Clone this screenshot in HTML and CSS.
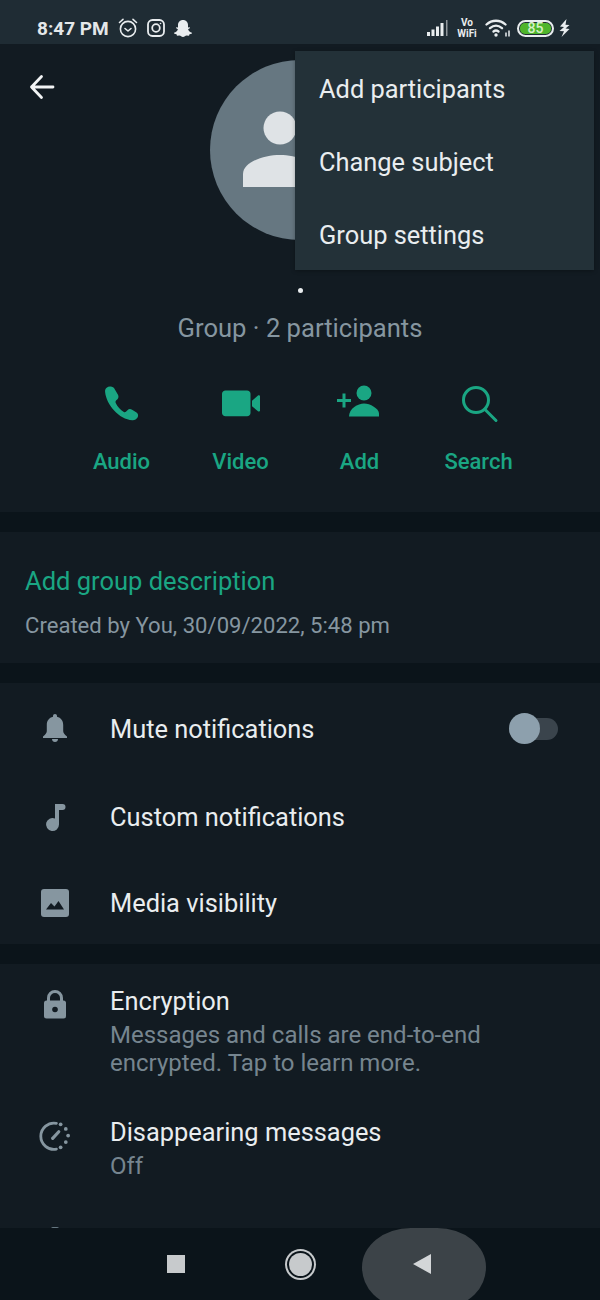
FILE: index.html
```html
<!DOCTYPE html>
<html lang="en">
<head>
    <meta charset="UTF-8">
    <meta name="viewport" content="width=device-width, initial-scale=1.0">
    <title>Group info</title>
    <link rel="stylesheet" href="styles.css">
</head>
<body>
    <div class="status-bar">
        <div class="status-left">
            <span class="clock">8:47 PM</span>
            <svg class="status-icon" width="22" height="22" viewBox="0 0 22 22" fill="none" stroke="#e9edef" stroke-width="1.6" stroke-linecap="round" stroke-linejoin="round">
                <circle cx="11" cy="12" r="7.6"/><path d="M2.5 5.5 6 2.4M19.5 5.5 16 2.4M8 11.5l3 2.5 3-2.5"/>
            </svg>
            <svg class="status-icon" width="18" height="18" viewBox="0 0 18 18" fill="none" stroke="#e9edef" stroke-width="1.8">
                <rect x="1" y="1" width="16" height="16" rx="4.5"/><circle cx="9" cy="9" r="3.8"/><circle cx="13.5" cy="4.5" r=".8" fill="#e9edef" stroke="none"/>
            </svg>
            <svg class="status-icon" width="20" height="19" viewBox="0 0 20 19" fill="#e9edef">
                <path d="M10 1c3 0 5 2.200 5 5v2.500l1.600-.3.500.9-2 1.200c.5 1.700 2 2.900 3.900 3.500l-.3 1-2.200.5-.5 1.400-2.500-.2c-1.200.3-2 1.500-3.500 1.500s-2.300-1.200-3.500-1.500l-2.500.2-.5-1.400-2.200-.5-.3-1c1.900-.6 3.400-1.800 3.900-3.500l-2-1.200.5-.9 1.600.3V6c0-2.800 2-5 5-5z"/>
            </svg>
        </div>
        <div class="status-right">
            <svg width="23" height="18" viewBox="0 0 23 18" fill="#e9edef">
                <rect x="1" y="13" width="3" height="4"/><rect x="5.500" y="10.500" width="3" height="6.500"/><rect x="10" y="7.500" width="3" height="9.500"/><rect x="14.500" y="4" width="3" height="13"/><rect x="20" y="1" width="1.500" height="16" opacity=".55"/>
            </svg>
            <span class="vowifi">Vo<br>WiFi</span>
            <svg class="wifi" width="26" height="20" viewBox="0 0 26 20" fill="none" stroke="#e9edef" stroke-width="2.300" stroke-linecap="round">
                <path d="M1.500 6.500C7 1.500 15 1.500 20.500 6.500M5 10.200c3.800-3.300 8.200-3.300 12 0M8.500 13.500c1.700-1.300 3.300-1.300 5 0"/>
                <circle cx="11" cy="17" r="1.700" fill="#e9edef" stroke="none"/>
                <path d="M21 14.500v4M24 12.500v6" stroke-width="1.500" stroke-linecap="butt"/>
            </svg>
            <span class="battery"><span class="battery-level">85</span></span>
            <svg class="bolt" width="11" height="18" viewBox="0 0 11 18" fill="#e9edef"><path d="M7.500 0 1 7.500l4 .5L.5 12l4.500.3L2.500 18l8-8-4-.5 4-3.500-4-.3z"/></svg>
        </div>
    </div>

    <div class="page">
        <section class="profile">
            <button class="back-btn">
                <svg width="28" height="28" viewBox="0 0 28 28" fill="none" stroke="#f2f4f5" stroke-width="2.800" stroke-linecap="round" stroke-linejoin="round"><path d="M3.500 14h21.500M13.500 3.500 3.500 14l10 10.500"/></svg>
            </button>
            <div class="avatar">
                <svg width="180" height="180" viewBox="0 0 180 180" fill="#dfe3e6">
                    <circle cx="70" cy="68" r="16.500"/>
                    <path d="M33 127v-13c0-12 21-19 37-19s37 7 37 19v13z"/>
                </svg>
            </div>
            <div class="dot"></div>
            <p class="group-meta">Group · 2 participants</p>
            <div class="actions">
                <div class="action">
                    <svg width="40" height="40" viewBox="0 0 40 40" fill="#1aa683"><path d="M5 4.500c-1.200 1-1.700 2.300-1.500 4C4.700 21 17 35 30 36c2 .2 4-1 5-2.700 1-1.800.6-3.600-1-4.800l-4.300-2.700c-1.700-1-3.200-.8-4.500.4l-1.500 1.500c-.6.600-1.300.6-2 .2-3.200-2-6.500-5.600-8-9-.3-.7-.1-1.400.4-2l1.400-1.400c1.100-1.200 1.300-2.700.5-4.300L13 6c-1.100-2-2.700-2.900-4.800-2.700-1.200 0-2.300.4-3.200 1.200z" transform="translate(-.5 -.8) scale(1.030)"/></svg>
                    <span>Audio</span>
                </div>
                <div class="action">
                    <svg width="40" height="40" viewBox="0 0 40 40" fill="#1aa683"><path d="M4.500 6h21.500c2 0 3.500 1.500 3.500 3.500v21c0 2-1.500 3.500-3.500 3.500H4.500c-2 0-3.500-1.500-3.500-3.500v-21C1 7.500 2.500 6 4.500 6zM31 17l6-5.500c.6-.5 2-.2 2 .8v15.500c0 1-1.400 1.300-2 .8L31 23z" transform="translate(0 1) scale(1 .92)"/></svg>
                    <span>Video</span>
                </div>
                <div class="action">
                    <svg width="44" height="40" viewBox="0 0 44 40" fill="#1aa683"><circle cx="26" cy="9" r="7.500"/><path d="M11 32.500c0-8 9-13 15-13s15 5 15 10v3z"/><rect x="-1" y="15" width="14" height="3"/><rect x="4.500" y="9.500" width="3" height="14"/></svg>
                    <span>Add</span>
                </div>
                <div class="action">
                    <svg width="40" height="40" viewBox="0 0 40 40" fill="none" stroke="#1aa683" stroke-width="3" stroke-linecap="round"><circle cx="17" cy="16" r="12.500"/><path d="M26 25.500 37 36.500"/></svg>
                    <span>Search</span>
                </div>
            </div>
            <div class="menu">
                <div class="menu-item">Add participants</div>
                <div class="menu-item">Change subject</div>
                <div class="menu-item">Group settings</div>
            </div>
        </section>

        <section class="description">
            <p class="desc-link">Add group description</p>
            <p class="desc-created">Created by You, 30/09/2022, 5:48 pm</p>
        </section>

        <section class="settings notify">
            <div class="row row-mute">
                <svg class="row-icon" width="30" height="30" viewBox="0 1 30 30" fill="#8696a0"><path d="M15 1c1.200 0 2 .8 2 2v.8c4 .9 6.200 4.200 6.200 8.200v6c0 1.800 1 3.200 3.800 5.500v1.500H3v-1.500c2.800-2.300 3.800-3.700 3.800-5.500v-6c0-4 2.200-7.300 6.200-8.200V3c0-1.200.8-2 2-2zM12 26h6c0 1.800-1.300 3-3 3s-3-1.200-3-3z"/></svg>
                <span class="row-title">Mute notifications</span>
                <span class="switch"><span class="switch-thumb"></span></span>
            </div>
            <div class="row row-custom">
                <svg class="row-icon" width="30" height="30" viewBox="0 0 30 30" fill="#8696a0"><path d="M15 2h7.500a3 3 0 0 1 0 6H19v14.500a6.500 6.500 0 1 1-4-6z"/></svg>
                <span class="row-title">Custom notifications</span>
            </div>
            <div class="row row-media">
                <svg class="row-icon" width="30" height="30" viewBox="0 0 30 30"><rect x="1" y="1" width="28" height="28" rx="3" fill="#8696a0"/><path d="M6 21.500 11 15l3.500 3.500L18.500 13l5.500 8.500z" fill="#121b22"/></svg>
                <span class="row-title">Media visibility</span>
            </div>
        </section>

        <section class="settings security">
            <div class="row-tall">
                <svg class="row-icon" width="30" height="32" viewBox="0 .5 30 32"><path d="M7 13V9.500a8 8 0 0 1 16 0V13h-3V9.500a5 5 0 0 0-10 0V13z" fill="#8696a0"/><rect x="4" y="12" width="22" height="18" rx="2.500" fill="#8696a0"/><circle cx="15" cy="21" r="2.800" fill="#121b22"/></svg>
                <div class="row-text">
                    <span class="row-title">Encryption</span>
                    <p class="row-sub">Messages and calls are end-to-end encrypted. Tap to learn more.</p>
                </div>
            </div>
            <div class="row-tall row-disappearing">
                <svg class="row-icon" width="32" height="32" viewBox="0 0 32 32" fill="none" stroke="#8696a0" stroke-width="3" stroke-linecap="round">
                    <path d="M17.500 2.500a14 14 0 1 0 0 27.500"/><path d="M13.500 18.500 20 11.500" stroke-width="3.400"/>
                    <g fill="#8696a0" stroke="none"><circle cx="22" cy="3.500" r="2"/><circle cx="27.500" cy="8.500" r="2"/><circle cx="30" cy="15.500" r="2"/><circle cx="27.500" cy="22.500" r="2"/><circle cx="22" cy="28" r="2"/></g>
                </svg>
                <div class="row-text">
                    <span class="row-title">Disappearing messages</span>
                    <p class="row-sub">Off</p>
                </div>
            </div>
            <div class="next-row-peek"></div>
        </section>
    </div>

    <nav class="nav-bar">
        <div class="nav-slot"><span class="nav-square"></span></div>
        <div class="nav-slot"><span class="nav-circle"></span></div>
        <div class="nav-slot nav-active"><span class="nav-back"></span></div>
    </nav>
</body>
</html>
```

FILE: styles.css
```css
* {
    box-sizing: border-box;
}

html, body {
    margin: 0;
    padding: 0;
}

body {
    width: 600px;
    height: 1300px;
    overflow: hidden;
    font-family: Roboto, "Liberation Sans", sans-serif;
    background-color: #0b141a;
    color: #e9edef;
    display: flex;
    flex-direction: column;
}

p {
    margin: 0;
}

.status-bar {
    height: 44px;
    flex: none;
    background-color: #1f2c34;
    display: flex;
    align-items: center;
    justify-content: space-between;
    padding: 12px 30px 0 37px;
}

.status-left, .status-right {
    display: flex;
    align-items: center;
}

.clock {
    font-size: 19px;
    font-weight: 700;
    color: #e4e7e9;
    margin-right: 8px;
}

.status-icon {
    margin-right: 8px;
}

.status-icon:last-child {
    margin-right: 0;
}

.vowifi {
    width: 20px;
    margin-left: 8px;
    font-size: 10px;
    line-height: 11px;
    font-weight: 700;
    text-align: center;
    color: #e9edef;
}

.wifi {
    margin-left: 8px;
}

.battery {
    width: 37px;
    height: 17px;
    border: 2px solid #e9edef;
    border-radius: 9px;
    padding: 1px;
    display: flex;
    margin-left: 6px;
}

.battery-level {
    width: 31px;
    background-color: #4fb52c;
    border-radius: 5px;
    font-size: 14px;
    line-height: 11px;
    font-weight: 500;
    text-align: center;
    color: #d5f0c8;
}

.bolt {
    margin-left: 5px;
}

.page {
    flex: 1;
    min-height: 0;
    overflow: hidden;
    display: flex;
    flex-direction: column;
    gap: 20px;
}

.profile {
    position: relative;
    flex: none;
    height: 468px;
    background-color: #121b22;
    padding-top: 16px;
    display: flex;
    flex-direction: column;
    align-items: center;
}

.back-btn {
    position: absolute;
    left: 28px;
    top: 29px;
    padding: 0;
    background: none;
    border: none;
    display: flex;
}

.avatar {
    width: 180px;
    height: 180px;
    border-radius: 50%;
    background-color: #667781;
    flex: none;
}

.dot {
    width: 5px;
    height: 5px;
    border-radius: 50%;
    background-color: #e9edef;
    margin-top: 48px;
}

.group-meta {
    margin-top: 19px;
    font-size: 25.600px;
    line-height: 32px;
    color: #8696a0;
}

.actions {
    margin-top: 40px;
    display: grid;
    grid-template-columns: repeat(4, 119px);
}

.action {
    display: flex;
    flex-direction: column;
    align-items: center;
    gap: 24px;
    font-size: 22px;
    line-height: 28px;
    font-weight: 500;
    color: #1aa683;
}

.action svg {
    overflow: visible;
}

.menu {
    position: absolute;
    left: 295px;
    top: 7px;
    width: 299px;
    height: 219px;
    padding-top: 1px;
    background-color: #233138;
    box-shadow: 0 1px 4px rgba(0, 0, 0, 0.3);
    display: flex;
    flex-direction: column;
}

.menu-item {
    height: 73px;
    flex: none;
    padding-left: 24px;
    display: flex;
    align-items: center;
    font-size: 25.400px;
    color: #e9edef;
}

.description {
    flex: none;
    height: 131px;
    background-color: #121b22;
    padding: 33px 25px 0;
}

.desc-link {
    font-size: 25.500px;
    line-height: 32px;
    color: #1aa683;
}

.desc-created {
    margin-top: 14px;
    font-size: 22.100px;
    line-height: 28px;
    color: #8696a0;
}

.settings {
    flex: none;
    background-color: #121b22;
}

.notify {
    height: 261px;
    padding-top: 2px;
}

.row {
    display: flex;
    align-items: center;
    height: 87px;
    padding-left: 40px;
}

.row-custom {
    height: 89px;
}

.row-media {
    height: 83px;
}

.row-icon {
    width: 30px;
    flex: none;
    margin-right: 40px;
    overflow: visible;
}

.row-title {
    font-size: 25.400px;
    line-height: 32px;
    color: #e9edef;
}

.row-mute .row-title {
    flex: 1;
}

.switch {
    width: 49px;
    height: 22px;
    margin-right: 42px;
    border-radius: 11px;
    background-color: #3a444c;
    display: flex;
    align-items: center;
}

.switch-thumb {
    width: 31px;
    height: 31px;
    border-radius: 50%;
    background-color: #8da0ad;
    flex: none;
}

.security {
    flex: 1;
    padding-top: 21px;
}

.row-tall {
    display: flex;
    align-items: flex-start;
    padding-left: 40px;
}

.row-tall .row-icon {
    margin-top: 4px;
}

.row-text {
    flex: 1;
}

.row-sub {
    width: 400px;
    margin-top: 4px;
    font-size: 24px;
    line-height: 28px;
    color: #76858f;
}

.row-disappearing {
    margin-top: 39px;
}

.next-row-peek {
    width: 8px;
    height: 2px;
    margin: 47px 0 0 51px;
    border-radius: 2px 2px 0 0;
    background-color: #667781;
}

.nav-bar {
    flex: none;
    height: 72px;
    background-color: #0b141a;
    display: grid;
    grid-template-columns: repeat(3, 124px);
    grid-template-rows: 72px;
    padding-left: 114px;
    justify-content: start;
    overflow: hidden;
}

.nav-slot {
    display: flex;
    align-items: center;
    justify-content: center;
}

.nav-square {
    width: 18px;
    height: 18px;
    background-color: #c7cacc;
}

.nav-circle {
    width: 23px;
    height: 23px;
    border-radius: 50%;
    background-color: #c7cacc;
    box-shadow: 0 0 0 2px #0b141a, 0 0 0 4px #c7cacc;
}

.nav-active {
    background-color: #3c4348;
    border-radius: 50px 50px 40px 40px / 40px 40px 40px 40px;
    height: 78px;
}

.nav-back {
    width: 0;
    height: 0;
    border-top: 10px solid transparent;
    border-bottom: 10px solid transparent;
    border-right: 18px solid #d3d6d8;
    margin: -6px 4px 0 0;
}
```
